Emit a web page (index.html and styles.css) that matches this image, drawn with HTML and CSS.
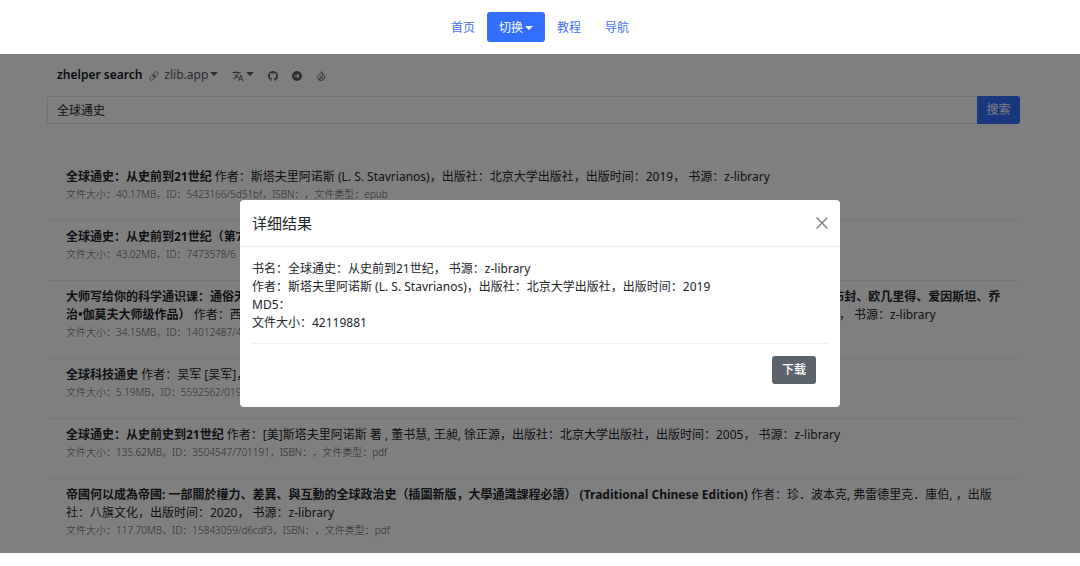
FILE: index.html
```html
<!DOCTYPE html>
<html lang="zh-CN">
<head>
<meta charset="utf-8">
<meta name="viewport" content="width=device-width, initial-scale=1">
<title>zhelper search</title>
<link rel="stylesheet" href="styles.css">
</head>
<body>
<nav class="site-nav" aria-label="主导航">
  <a class="site-link" href="#home">首页</a>
  <button class="site-switch" type="button" aria-haspopup="true">切换<span class="caret"></span></button>
  <a class="site-link" href="#tutorial">教程</a>
  <a class="site-link" href="#nav">导航</a>
</nav>

<main class="frame">
  <div class="content">
    <header class="toolbar">
      <a class="brand" href="#search">zhelper search</a>
      <button class="tool tool-domain" type="button">
        <svg class="icon" viewBox="0 0 16 16" fill="none" stroke="currentColor" stroke-width="1.3" stroke-linecap="round" stroke-linejoin="round" aria-hidden="true">
          <path d="M6.4 9.6l3.2-3.2M7 5l3-3c1.500-1.100 3-.9 3.900 0s1.200 2.500 0 4l-3 3c-1 .9-2.500.8-3.400-.1L7 8.300C6.100 7.300 6.100 6 7 5zM9 11l-3 3c-1.500 1.100-3 .9-3.900 0s-1.200-2.500 0-4l3-3c1-.9 2.500-.8 3.400.1l.5.6C9.900 8.700 9.900 10 9 11z"/>
        </svg>
        <span>zlib.app</span><span class="caret"></span>
      </button>
      <button class="tool" type="button" aria-label="语言">
        <svg class="icon icon-wide" viewBox="0 0 24 24" fill="currentColor" aria-hidden="true">
          <path d="M12.870 15.070l-2.540-2.510.03-.03A17.520 17.520 0 0 0 14.070 6H17V4h-7V2H8v2H1v1.990h11.170C11.500 7.920 10.440 9.750 9 11.350 8.070 10.320 7.300 9.190 6.690 8h-2c.73 1.630 1.730 3.170 2.980 4.560l-5.090 5.020L4 19l5-5 3.110 3.110.76-2.040zM18.500 10h-2L12 22h2l1.120-3h4.750L21 22h2l-4.500-12zm-2.620 7l1.620-4.330L19.120 17h-3.240z"/>
        </svg>
        <span class="caret"></span>
      </button>
      <a class="tool" href="#github" aria-label="GitHub">
        <svg class="icon" viewBox="0 0 16 16" fill="currentColor" aria-hidden="true">
          <path d="M8 0C3.580 0 0 3.580 0 8c0 3.540 2.290 6.530 5.470 7.590.4.07.55-.17.55-.38 0-.19-.01-.82-.01-1.490-2.010.37-2.530-.49-2.690-.94-.09-.23-.48-.94-.82-1.130-.28-.15-.68-.52-.01-.53.63-.01 1.080.58 1.230.82.72 1.210 1.870.87 2.330.66.07-.52.28-.87.51-1.070-1.780-.2-3.640-.89-3.640-3.950 0-.87.31-1.590.82-2.150-.08-.2-.36-1.020.08-2.120 0 0 .67-.21 2.200.82.64-.18 1.320-.27 2-.27s1.360.09 2 .27c1.530-1.040 2.200-.82 2.200-.82.44 1.100.16 1.920.08 2.120.51.56.82 1.270.82 2.150 0 3.070-1.870 3.750-3.650 3.950.29.25.54.73.54 1.480 0 1.070-.01 1.930-.01 2.200 0 .21.15.46.55.38A8.010 8.010 0 0 0 16 8c0-4.420-3.580-8-8-8z"/>
        </svg>
      </a>
      <a class="tool" href="#telegram" aria-label="Telegram">
        <svg class="icon" viewBox="0 0 16 16" fill="currentColor" aria-hidden="true">
          <path d="M16 8A8 8 0 1 1 0 8a8 8 0 0 1 16 0zM8.290 5.910c-.78.32-2.330.99-4.670 2.010-.38.15-.58.3-.59.44-.03.27.39.35.87.51.4.13.94.28 1.220.29.25 0 .54-.1.85-.32 2.140-1.440 3.240-2.170 3.310-2.190.05-.01.12-.02.16.02.05.04.04.12.04.14-.04.16-1.860 1.770-1.960 1.880-.42.43-.89.69-.16 1.170.63.41 1 .68 1.640 1.110.42.27.74.6 1.170.56.2-.02.4-.2.5-.76.25-1.330.74-4.200.86-5.380.04-.43-.07-.66-.39-.66-.44.01-1.110.24-2.850 1.180z"/>
        </svg>
      </a>
      <a class="tool" href="#hot" aria-label="热门">
        <svg class="icon" viewBox="0 0 16 16" fill="none" stroke="currentColor" stroke-width="1.400" stroke-linejoin="round" aria-hidden="true">
          <path d="M8.500 1c.3 2-.4 3-1.700 4L4 6.500C2.500 8 2 9 2 10.200 2 13 4.700 15.200 8 15.200s6-2.200 6-5c0-2-1-3.700-2.300-4.800-.2 1-.6 1.500-1.300 2C10.500 4.500 10.200 2.500 8.500 1zM4.500 11.500L8 8.500l3.500 3M6 14.500V12l2-1.500 2 1.500v2.500"/>
        </svg>
      </a>
    </header>

    <form class="search" role="search">
      <input class="search-input" type="text" aria-label="搜索内容" value="全球通史">
      <button class="search-button" type="button">搜索</button>
    </form>

    <ul class="results">
      <li class="result">
        <p class="line"><b>全球通史：从史前到21世纪</b> 作者：斯塔夫里阿诺斯 (L. S. Stavrianos)，出版社：北京大学出版社，出版时间：2019， 书源：z-library</p>
        <p class="meta">文件大小：40.17MB，ID：5423166/5d51bf，ISBN：，文件类型：epub</p>
      </li>
      <li class="result">
        <p class="line"><b>全球通史：从史前到21世纪（第7版）</b></p>
        <p class="meta">文件大小：43.02MB，ID：7473578/6</p>
      </li>
      <li class="result">
        <p class="line"><b>大师写给你的科学通识课：通俗天文学、几何原本、相对论、自然史、从一到无穷大、物理世界奇遇记全6册科普经典名著精选丛书（西蒙·纽康、布封、欧几里得、爱因斯坦、乔治•伽莫夫大师级作品）</b> 作者：西蒙·纽康、布封、欧几里得、爱因斯坦、乔治•伽莫夫，出版社：北京理工大学出版社有限公司，出版时间：2019.6， 书源：z-library</p>
        <p class="meta">文件大小：34.15MB，ID：14012487/4</p>
      </li>
      <li class="result">
        <p class="line"><b>全球科技通史</b> 作者：吴军 [吴军]，</p>
        <p class="meta">文件大小：5.19MB，ID：5592562/019</p>
      </li>
      <li class="result">
        <p class="line"><b>全球通史：从史前史到21世纪</b> 作者：[美]斯塔夫里阿诺斯 著 , 董书慧, 王昶, 徐正源，出版社：北京大学出版社，出版时间：2005， 书源：z-library</p>
        <p class="meta">文件大小：135.62MB，ID：3504547/701191，ISBN：，文件类型：pdf</p>
      </li>
      <li class="result">
        <p class="line"><b>帝國何以成為帝國: 一部關於權力、差異、與互動的全球政治史（插圖新版，大學通識課程必讀） (Traditional Chinese Edition)</b> 作者：珍．波本克, 弗雷德里克．庫伯, ，出版社：八旗文化，出版时间：2020， 书源：z-library</p>
        <p class="meta">文件大小：117.70MB，ID：15843059/d6cdf3，ISBN：，文件类型：pdf</p>
      </li>
    </ul>
  </div>

  <div class="overlay">
    <section class="modal" role="dialog" aria-modal="true" aria-labelledby="modal-title">
      <header class="modal-head">
        <h2 class="modal-title" id="modal-title">详细结果</h2>
        <button class="modal-close" type="button" aria-label="关闭">
          <svg class="close-icon" viewBox="0 0 12 12" fill="none" stroke="currentColor" stroke-width="1.300" stroke-linecap="round" aria-hidden="true"><path d="M1 1l10 10M11 1L1 11"/></svg>
        </button>
      </header>
      <div class="modal-body">
        <p class="line">书名：全球通史：从史前到21世纪， 书源：z-library</p>
        <p class="line">作者：斯塔夫里阿诺斯 (L. S. Stavrianos)，出版社：北京大学出版社，出版时间：2019</p>
        <p class="line">MD5：</p>
        <p class="line">文件大小：42119881</p>
        <div class="modal-actions">
          <button class="download" type="button">下载</button>
        </div>
      </div>
    </section>
  </div>
</main>
<footer class="page-end"></footer>
</body>
</html>
```
FILE: styles.css
```css
* {
  box-sizing: border-box;
}

body {
  margin: 0;
  min-height: 100vh;
  display: flex;
  flex-direction: column;
  background: #fff;
  color: #212529;
  font: 12px/18px "Noto Sans", "Noto Sans CJK SC", sans-serif;
  text-spacing-trim: space-all;
}

button,
input {
  font: inherit;
}

button {
  border: 0;
  cursor: pointer;
}

a {
  text-decoration: none;
}

.caret {
  display: inline-block;
  margin-left: 2px;
  vertical-align: 2px;
  border-top: 4px solid;
  border-left: 4px solid transparent;
  border-right: 4px solid transparent;
}

.site-nav {
  display: flex;
  justify-content: center;
  padding: 12px;
}

.site-link {
  padding: 7px 12px 5px;
  color: #4470ea;
}

.site-switch {
  padding: 7px 12px 5px;
  border-radius: 3px;
  background: #3370ff;
  color: #fff;
}

.frame {
  position: relative;
  flex: 1;
}

.content {
  padding: 0 60px 0 47px;
}

.toolbar {
  display: flex;
  align-items: center;
  gap: 14px;
  padding: 12px 10px;
}

.brand {
  margin-right: -7px;
  color: #101418;
  font-weight: 600;
}

.tool {
  display: flex;
  align-items: center;
  padding: 0;
  background: none;
  color: #5c6065;
}

.tool .caret {
  margin-bottom: 2px;
}

.icon {
  width: 10px;
  height: 10px;
  margin-top: 2px;
}

.icon-wide {
  width: 12px;
  height: 12px;
}

.tool-domain .icon {
  margin-right: 5px;
}

.search {
  display: flex;
}

.search-input {
  flex: 1;
  min-width: 0;
  height: 28px;
  padding: 0 9px;
  border: 1px solid #dee2e6;
  border-right: 0;
  border-radius: 3px 0 0 3px;
  background: #fff;
  color: #212529;
}

.search-button {
  padding: 0 9px;
  width: 43px;
  border-radius: 0 3px 3px 0;
  background: #3370ff;
  color: #fff;
}

.results {
  margin: 37px 0 0;
  padding: 0;
  list-style: none;
}

.result {
  padding: 7px 18px 17px 19px;
}

.result + .result {
  border-top: 1px solid #eceded;
}

.result:last-child {
  padding-bottom: 12px;
}

.line,
.meta {
  margin: 0;
}

.meta {
  color: #54595e;
  font-size: 10px;
  font-weight: 300;
  line-height: 17px;
}

.overlay {
  position: absolute;
  inset: 0;
  display: flex;
  align-items: center;
  justify-content: center;
  background: rgba(0, 0, 0, 0.5);
}

.modal {
  width: 100%;
  max-width: 600px;
  border-radius: 4px;
  background: #fff;
}

.modal-head {
  display: flex;
  align-items: center;
  justify-content: space-between;
  padding: 12px;
  border-bottom: 1px solid #e9ebed;
}

.modal-title {
  margin: 0;
  font-size: 15px;
  font-weight: 400;
  line-height: 22px;
}

.modal-close {
  display: flex;
  padding: 0;
  background: none;
  color: #777;
}

.close-icon {
  width: 12px;
  height: 12px;
}

.modal-body {
  padding: 13px 12px 11px;
}

.modal-actions {
  display: flex;
  justify-content: flex-end;
  margin-top: 11px;
  padding: 12px;
  border-top: 1px solid #f0f0f1;
}

.download {
  padding: 5px 10px;
  border-radius: 3px;
  background: #5c636a;
  color: #fff;
  font-weight: 500;
}

.page-end {
  height: 13px;
}
```
